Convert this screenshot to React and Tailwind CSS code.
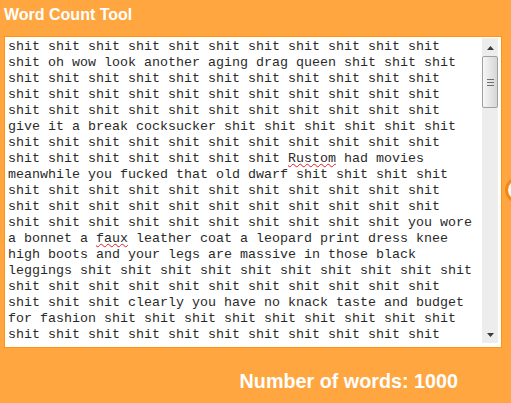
const lines = [
  "shit shit shit shit shit shit shit shit shit shit shit",
  "shit oh wow look another aging drag queen shit shit shit",
  "shit shit shit shit shit shit shit shit shit shit shit",
  "shit shit shit shit shit shit shit shit shit shit shit",
  "shit shit shit shit shit shit shit shit shit shit shit",
  "give it a break cocksucker shit shit shit shit shit shit",
  "shit shit shit shit shit shit shit shit shit shit shit",
  ["shit shit shit shit shit shit shit ", "Rustom", " had movies"],
  "meanwhile you fucked that old dwarf shit shit shit shit",
  "shit shit shit shit shit shit shit shit shit shit shit",
  "shit shit shit shit shit shit shit shit shit shit shit",
  "shit shit shit shit shit shit shit shit shit shit you wore",
  ["a bonnet a ", "faux", " leather coat a leopard print dress knee"],
  "high boots and your legs are massive in those black",
  "leggings shit shit shit shit shit shit shit shit shit shit",
  "shit shit shit shit shit shit shit shit shit shit shit",
  "shit shit shit clearly you have no knack taste and budget",
  "for fashion shit shit shit shit shit shit shit shit shit",
  "shit shit shit shit shit shit shit shit shit shit shit",
];

function Line({ line }) {
  if (typeof line === "string") return <div className="whitespace-pre">{line}</div>;
  const [before, word, after] = line;
  return (
    <div className="whitespace-pre">
      {before}
      <span className="underline decoration-wavy decoration-[#e02020] decoration-1 underline-offset-[1px]">{word}</span>
      {after}
    </div>
  );
}

function Arrow({ down }) {
  return (
    <svg width="7" height="4" viewBox="0 0 7 4" className={down ? "rotate-180" : ""}>
      <polygon points="0,4 7,4 3.5,0" fill="#3a3a3a" />
    </svg>
  );
}

function Scrollbar() {
  return (
    <div className="mt-[1px] mb-[4px] mr-[3px] flex w-[16px] flex-col bg-[#ededed]">
      <div className="flex h-[18px] items-center justify-center pt-[2px]">
        <Arrow />
      </div>
      <div className="flex h-[52px] flex-col items-center justify-center gap-[2px] rounded-[2px] border border-[#a0a0a0] bg-gradient-to-r from-[#f7f7f7] to-[#d6d6d6]">
        <div className="h-[1px] w-[7px] bg-[#6e6e6e]" />
        <div className="h-[1px] w-[7px] bg-[#6e6e6e]" />
        <div className="h-[1px] w-[7px] bg-[#6e6e6e]" />
      </div>
      <div className="flex-1" />
      <div className="flex h-[16px] items-center justify-center">
        <Arrow down />
      </div>
    </div>
  );
}

export default function App() {
  return (
    <div className="relative h-[403px] w-[511px] overflow-hidden bg-[#ffa640] font-['Liberation_Sans',Arial,sans-serif]">
      <h1 className="pl-[4px] pt-[5px] text-[16px] font-bold leading-[19px] text-white">Word Count Tool</h1>

      <div className="ml-[4px] mt-[12px] flex h-[312px] w-[498px] border border-[#ff9410] bg-white">
        <div className="flex-1 overflow-hidden pl-[3px] pt-[2px] font-['Liberation_Mono','Courier_New',monospace] text-[13.333px] leading-[16px] text-[#2a2a2a]">
          {lines.map((line, i) => (
            <Line key={i} line={line} />
          ))}
        </div>
        <Scrollbar />
      </div>

      <div className="mt-[22px] flex justify-end pr-[53px]">
        <p className="text-[19.75px] font-bold leading-[23px] text-white">Number of words: 1000</p>
      </div>

      <div className="absolute left-[505px] top-[177px] h-[26px] w-[26px] rounded-full border-[3px] border-[#f28a17] bg-[#fffaf0]" />
    </div>
  );
}
